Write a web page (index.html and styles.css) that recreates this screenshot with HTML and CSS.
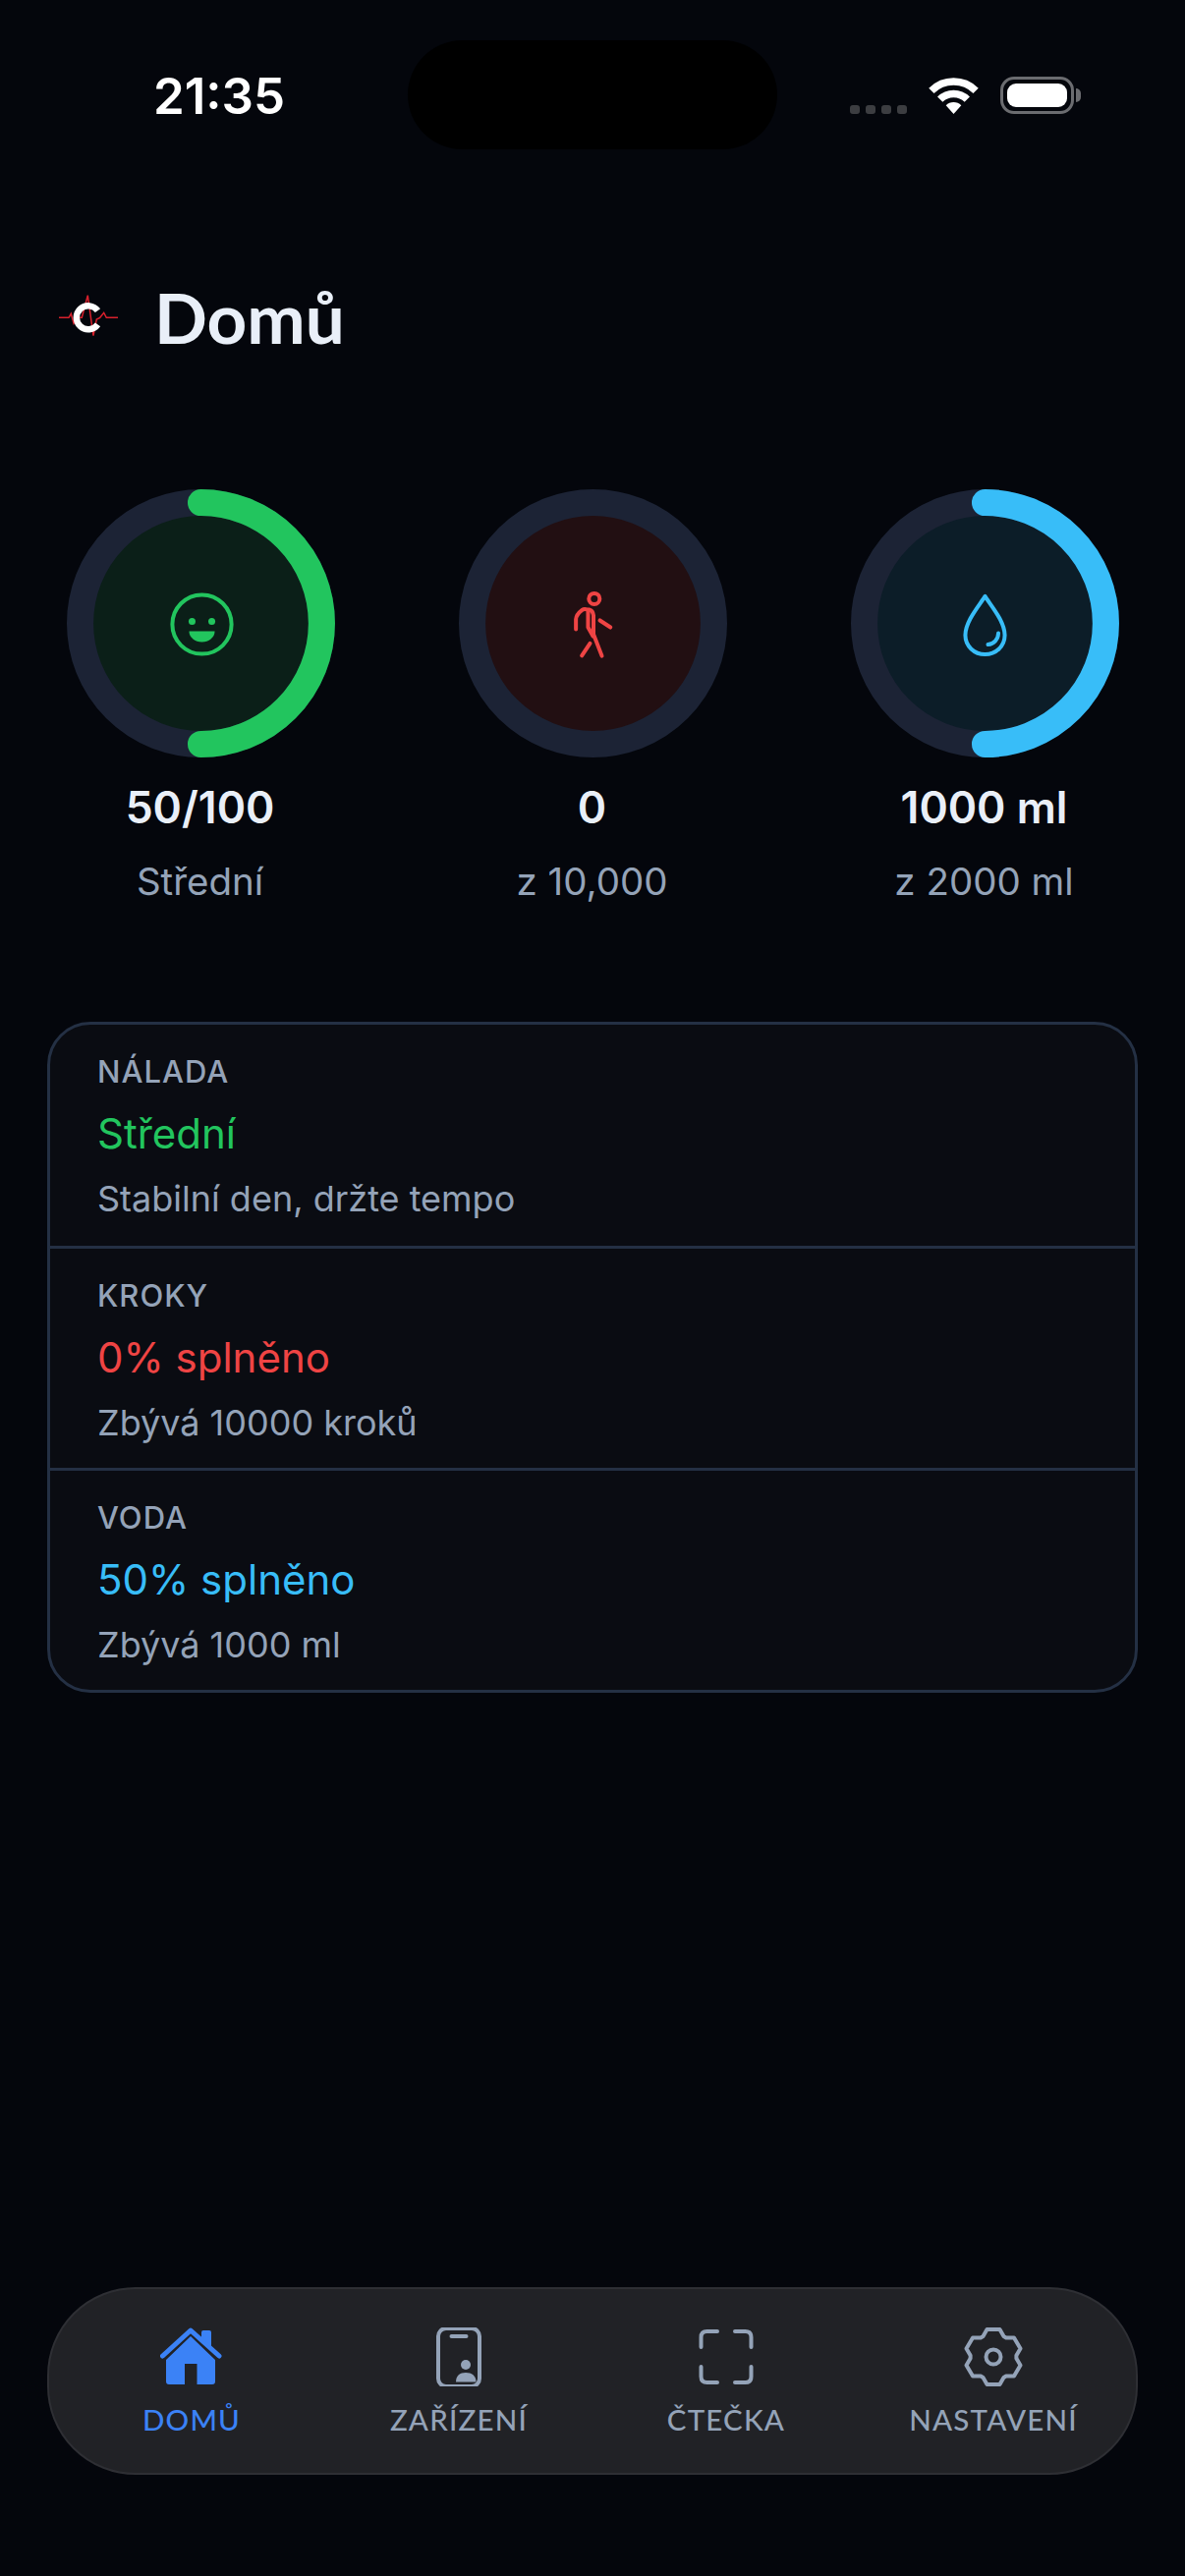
FILE: index.html
```html
<!DOCTYPE html>
<html lang="cs">
  <head>
    <meta charset="utf-8" />
    <meta name="viewport" content="width=device-width,initial-scale=1" />
    <title>Domů</title>
    <link rel="stylesheet" href="styles.css">
  </head>
  <body>
    <div class="statusbar">
      <span class="time">21:35</span>
      <div class="island"></div>
      <div class="status-icons">
        <div class="signal"><i></i><i></i><i></i><i></i></div>
        <svg class="wifi" width="51" height="37" viewBox="0 0 51 37">
          <path d="M2.9 13.4A32 32 0 0 1 48.1 13.4" />
          <path d="M11.7 22.2A19.5 19.5 0 0 1 39.3 22.2" />
          <path class="wifi-dot" d="M25.5 37L17.7 28.2A11 11 0 0 1 33.3 28.2Z" />
        </svg>
        <div class="battery"><div class="battery-level"></div></div>
        <div class="battery-nub"></div>
      </div>
    </div>

    <header class="header">
      <svg class="logo" width="60" height="60" viewBox="0 0 60 60">
        <path class="logo-pulse" d="M0 23.300H10L12.300 19.300L15 29.300L19 23.300H23.300L29.300 0.700L35 41.700L38.300 25L41.700 23.300L45.700 18.300L48.300 23.300H60" />
        <path class="logo-c" d="M39.500 16.200A12 12 0 1 0 39.500 30.400" />
      </svg>
      <h1>Domů</h1>
    </header>

    <section class="rings">
      <div class="ring-item">
        <svg class="ring" width="273" height="273" viewBox="0 0 272 272">
          <circle class="ring-fill-green" cx="136" cy="136" r="110" />
          <circle class="ring-track" cx="136" cy="136" r="122.500" />
          <path class="ring-arc arc-green" d="M136 13.500A122.500 122.500 0 0 1 136 258.500" />
          <g class="icon-green">
            <circle cx="137" cy="137" r="30" />
            <circle class="solid" cx="127" cy="134" r="3.500" />
            <circle class="solid" cx="147" cy="134" r="3.500" />
            <path class="solid" d="M124 144H150A13 11 0 0 1 124 144Z" />
          </g>
        </svg>
        <div class="ring-value">50/100</div>
        <div class="ring-label">Střední</div>
      </div>
      <div class="ring-item">
        <svg class="ring" width="273" height="273" viewBox="0 0 272 272">
          <circle class="ring-fill-red" cx="136" cy="136" r="110" />
          <circle class="ring-track" cx="136" cy="136" r="122.500" />
          <g class="icon-red">
            <circle cx="137.300" cy="111" r="5.500" />
            <path d="M118.700 142V132Q119 127 125 122.500Q127 121 130 122L132 122Q136 123 136.500 128V147L145 169" />
            <path d="M131 123V140L136 149" />
            <path d="M143 133L153.700 140" />
            <path d="M133 156.300L124.700 168.700" />
          </g>
        </svg>
        <div class="ring-value">0</div>
        <div class="ring-label">z 10,000</div>
      </div>
      <div class="ring-item">
        <svg class="ring" width="273" height="273" viewBox="0 0 272 272">
          <circle class="ring-fill-blue" cx="136" cy="136" r="110" />
          <circle class="ring-track" cx="136" cy="136" r="122.500" />
          <path class="ring-arc arc-blue" d="M136 13.500A122.500 122.500 0 0 1 136 258.500" />
          <g class="icon-blue">
            <path d="M136 108.500C130 118 116 134 116 148C116 159 125 167.500 136 167.500C147 167.500 156 159 156 148C156 134 142 118 136 108.500Z" />
            <path d="M149.500 146C149.500 152 145 157 139 157.500" />
          </g>
        </svg>
        <div class="ring-value">1000 ml</div>
        <div class="ring-label">z 2000 ml</div>
      </div>
    </section>

    <section class="card">
      <div class="card-row">
        <div class="row-title">NÁLADA</div>
        <div class="row-status green">Střední</div>
        <div class="row-note">Stabilní den, držte tempo</div>
      </div>
      <div class="card-row">
        <div class="row-title">KROKY</div>
        <div class="row-status red">0% splněno</div>
        <div class="row-note">Zbývá 10000 kroků</div>
      </div>
      <div class="card-row">
        <div class="row-title">VODA</div>
        <div class="row-status blue">50% splněno</div>
        <div class="row-note">Zbývá 1000 ml</div>
      </div>
    </section>

    <nav class="tabbar">
      <div class="tab active">
        <svg width="64" height="60" viewBox="0 0 64 60">
          <path class="home-body" d="M31 9L6 33V55Q6 58 9 58H25V37H37.500V58H53Q56 58 56 55V33Z" />
          <path class="home-body" d="M42 11V5Q42 3 44 3H50Q52 3 52 5V20Z" />
          <path class="home-roof" d="M2.500 29L31 3L60 29" />
        </svg>
        <span>DOMŮ</span>
      </div>
      <div class="tab">
        <svg width="64" height="60" viewBox="0 0 64 60">
          <rect class="line" x="11" y="1" width="42" height="59" rx="8" />
          <path class="line" d="M24.500 9H39.500" />
          <circle class="solid" cx="39" cy="38" r="5" />
          <path class="solid" d="M29 55.500C29 49 33 46 39 46C45 46 49.500 49 49.500 55.500Z" />
        </svg>
        <span>ZAŘÍZENÍ</span>
      </div>
      <div class="tab">
        <svg width="64" height="60" viewBox="0 0 64 60">
          <path class="line" d="M6.500 20V10Q6.500 4 12.500 4H23M41 4H51.500Q57.500 4 57.500 10V20M57.500 40V50Q57.500 56 51.500 56H41M23 56H12.500Q6.500 56 6.500 50V40" />
        </svg>
        <span>ČTEČKA</span>
      </div>
      <div class="tab">
        <svg width="64" height="60" viewBox="-32 -30 64 60">
          <path class="line" d="M-10.500 -21L-6.500 -28H6.500L10.500 -21L12.900 -19.600L21 -19.600L27.500 -8.400L23.400 -1.400V1.400L27.500 8.400L21 19.600L12.900 19.600L10.500 21L6.500 28H-6.500L-10.500 21L-12.900 19.600L-21 19.600L-27.500 8.400L-23.400 1.400V-1.400L-27.500 -8.400L-21 -19.600L-12.900 -19.600Z" />
          <circle class="line" cx="0" cy="0" r="7.500" />
        </svg>
        <span>NASTAVENÍ</span>
      </div>
    </nav>
  </body>
</html>
```

FILE: styles.css
```css
:root {
  --bg: #04060c;
  --green: #22c55e;
  --red: #ef4444;
  --blue: #38bdf8;
  --tab-blue: #3b82f6;
  --muted: #94a3b8;
  --light: #e9eff8;
  --track: #1c2335;
  --line: #243044;
}
* {
  margin: 0;
  padding: 0;
  box-sizing: border-box;
}
html,
body {
  height: 100%;
  background: var(--bg);
}
body {
  display: flex;
  flex-direction: column;
  font-family: "Inter", "Liberation Sans", sans-serif;
  color: var(--light);
}

.statusbar {
  display: flex;
  align-items: flex-end;
  height: 152px;
  padding: 41px 0 0 156px;
}
.time {
  width: 259px;
  padding-bottom: 29px;
  font-size: 51px;
  line-height: 50px;
  font-weight: 600;
  color: #fff;
}
.island {
  width: 376px;
  height: 111px;
  border-radius: 56px;
  background: #000;
}
.status-icons {
  display: flex;
  align-items: flex-end;
  margin-left: 74px;
  padding-bottom: 36px;
}
.signal {
  display: flex;
  gap: 6px;
  margin-right: 22px;
}
.signal i {
  width: 10px;
  height: 9px;
  border-radius: 3px;
  background: #3c3d41;
}
.wifi {
  margin-right: 22px;
}
.wifi path {
  fill: none;
  stroke: #fff;
  stroke-width: 7.5;
}
.wifi .wifi-dot {
  fill: #fff;
  stroke: none;
}
.battery {
  width: 75px;
  height: 38px;
  padding: 4px;
  border: 3px solid #6b6c70;
  border-radius: 14px;
}
.battery-level {
  width: 100%;
  height: 100%;
  border-radius: 9px;
  background: #fff;
}
.battery-nub {
  width: 5px;
  height: 14px;
  margin: 0 0 12px 2px;
  border-radius: 0 5px 5px 0;
  background: #6b6c70;
}

.header {
  display: flex;
  align-items: center;
  gap: 37px;
  margin-top: 131px;
  padding-left: 60px;
}
.logo {
  margin-top: 14px;
}
.logo-pulse {
  fill: none;
  stroke: #d8202c;
  stroke-width: 1.500;
}
.logo-c {
  fill: none;
  stroke: #fff;
  stroke-width: 6.500;
}
h1 {
  font-family: "Lato", "Liberation Sans", sans-serif;
  font-size: 71px;
  line-height: 80px;
  font-weight: 700;
  color: var(--light);
}

.rings {
  display: flex;
  justify-content: space-between;
  margin-top: 135px;
  padding: 0 67px 0 68px;
}
.ring-item {
  width: 273px;
  text-align: center;
}
.ring {
  display: block;
}
.ring-track {
  fill: none;
  stroke: var(--track);
  stroke-width: 27;
}
.ring-arc {
  fill: none;
  stroke-width: 27;
  stroke-linecap: round;
}
.arc-green {
  stroke: var(--green);
}
.arc-blue {
  stroke: var(--blue);
}
.ring-fill-green {
  fill: #0b1f18;
}
.ring-fill-red {
  fill: #220f12;
}
.ring-fill-blue {
  fill: #0c1d28;
}
.ring g {
  fill: none;
  stroke-width: 4;
  stroke-linecap: round;
  stroke-linejoin: round;
}
.icon-green {
  stroke: var(--green);
}
.icon-red {
  stroke: var(--red);
}
.icon-blue {
  stroke: var(--blue);
}
.ring .solid {
  fill: var(--green);
  stroke: none;
}
.ring-value {
  margin-top: 22px;
  padding-right: 2px;
  font-size: 44.500px;
  line-height: 58px;
  font-weight: 600;
}
.ring-label {
  margin-top: 23px;
  padding-right: 2px;
  font-size: 38.500px;
  line-height: 46px;
  color: var(--muted);
}

.card {
  margin: 120px 48px 0;
  border: 3px solid var(--line);
  border-radius: 44px;
  background: #0a0c12;
}
.card-row {
  height: 226px;
  padding: 28px 48px 0;
  border-top: 3px solid var(--line);
}
.card-row:first-child {
  height: 225px;
  border-top: none;
}
.row-title {
  font-size: 31px;
  line-height: 40px;
  font-weight: 500;
  letter-spacing: 1px;
  color: var(--muted);
}
.row-status {
  margin-top: 17px;
  font-size: 42px;
  line-height: 52px;
}
.row-note {
  margin-top: 18px;
  font-size: 36px;
  line-height: 44px;
  color: var(--muted);
}
.green {
  color: var(--green);
}
.red {
  color: var(--red);
}
.blue {
  color: var(--blue);
}

.tabbar {
  display: grid;
  grid-template-columns: repeat(4, 1fr);
  height: 191px;
  margin: auto 48px 103px;
  padding: 39px 9px 0;
  border: 2px solid #2e2f34;
  border-radius: 90px;
  background: #212226;
}
.tab {
  display: flex;
  flex-direction: column;
  align-items: center;
  gap: 14px;
  font-family: "Lato", "Liberation Sans", sans-serif;
  font-size: 29.500px;
  line-height: 40px;
  font-weight: 500;
  letter-spacing: 1.200px;
  color: var(--muted);
}
.tab.active {
  color: var(--tab-blue);
}
.tab .line {
  fill: none;
  stroke: var(--muted);
  stroke-width: 4;
  stroke-linecap: round;
  stroke-linejoin: round;
}
.tab .solid {
  fill: var(--muted);
}
.home-body {
  fill: var(--tab-blue);
}
.home-roof {
  fill: none;
  stroke: var(--tab-blue);
  stroke-width: 5;
  stroke-linecap: round;
  stroke-linejoin: round;
}
```
